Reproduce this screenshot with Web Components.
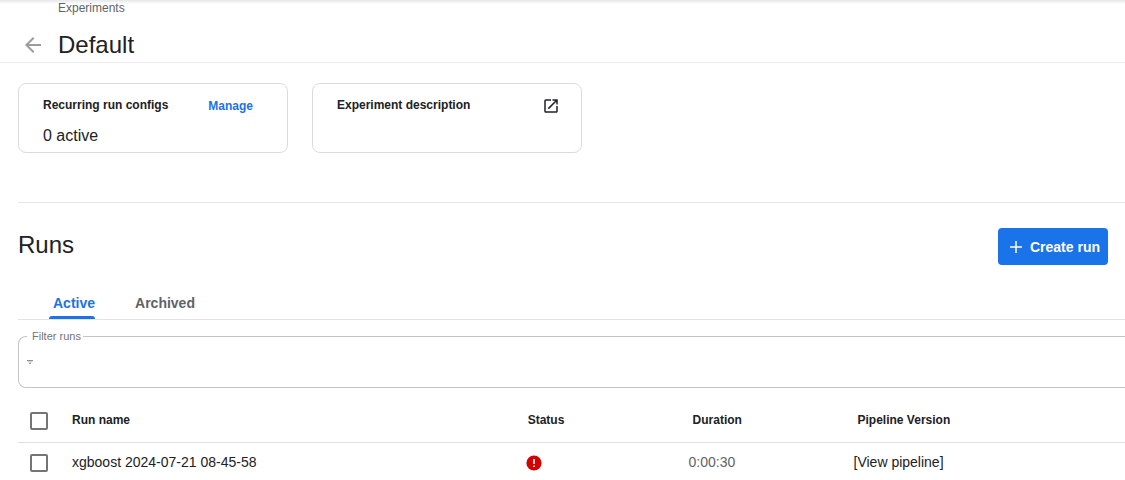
<!DOCTYPE html>
<html lang="en">
<head>
<meta charset="utf-8">
<title>Default - Experiments</title>
<style>
html { overflow: hidden; }
body { margin: 0; background: #fff; color: #202124; font: 14px/20px "Liberation Sans", Arial, sans-serif; --blue: #1a73e8; --line: #e8e8e8; }
</style>
</head>
<body>
<experiment-page></experiment-page>
<script>
const define = (name, html, setup) => {
  const template = document.createElement('template');
  template.innerHTML = '<style>:host{display:block}*{box-sizing:border-box}button{font:inherit;border:0;background:none;padding:0;cursor:pointer}svg{display:block}</style>' + html;
  customElements.define(name, class extends HTMLElement {
    constructor() {
      super();
      this.attachShadow({ mode: 'open' }).append(template.content.cloneNode(true));
    }
    connectedCallback() { if (setup) setup(this, this.shadowRoot); }
  });
};

define('page-header', `
<style>
:host { border-bottom: 1px solid #ebebeb; background: linear-gradient(#e6e7e9, #fff) 0 0 / 100% 4px no-repeat; padding-bottom: 2px; }
.crumb { padding-left: 58px; font-size: 12px; line-height: 16px; }
a { color: #5f6368; text-decoration: none; }
.title { display: flex; align-items: center; gap: 13px; padding: 14px 0 0 21px; }
button { color: #9c9c9c; }
h1 { margin: 0; font-size: 24px; line-height: 30px; height: 30px; font-weight: 400; }
</style>
<nav class="crumb" aria-label="Breadcrumb"><a href="#experiments">Experiments</a></nav>
<div class="title">
  <button aria-label="Back"><svg width="24" height="24" viewBox="0 0 24 24" fill="currentColor"><path d="M20 11H7.83l5.59-5.59L12 4l-8 8 8 8 1.410-1.410L7.830 13H20v-2z"/></svg></button>
  <h1><slot></slot></h1>
</div>`);

define('info-card', `
<style>
:host { flex: 0 1 270px; box-sizing: border-box; min-height: 70px; border: 1px solid #dadce0; border-radius: 8px; padding: 12px 24px 5px; }
.head { display: flex; height: 20px; align-items: center; justify-content: space-between; font-weight: 700; font-size: 12px; line-height: 18px; }
h2 { margin: 0; padding-bottom: 2px; font: inherit; }
.body { font-size: 16px; line-height: 22px; padding-top: 9px; }
</style>
<div class="head"><h2><slot name="title"></slot></h2><slot name="action"></slot></div>
<div class="body"><slot></slot></div>`);

define('text-action', `
<style>:host { padding-right: 10px; } button { display: block; color: var(--blue); }</style>
<button><slot></slot></button>`);

define('open-action', `
<style>:host { margin-right: -3px; } button { display: block; color: #202124; }</style>
<button aria-label="Open description"><svg width="18" height="18" viewBox="0 0 24 24" fill="currentColor"><path d="M19 19H5V5h7V3H5a2 2 0 0 0-2 2v14a2 2 0 0 0 2 2h14c1.100 0 2-.9 2-2v-7h-2v7zM14 3v2h3.590l-9.830 9.830 1.410 1.410L19 6.410V10h2V3h-7z"/></svg></button>`);

define('create-button', `
<style>
button { display: flex; align-items: center; gap: 4px; height: 37px; padding: 0 8px; border-radius: 4px; background: var(--blue); color: #fff; font-weight: 700; white-space: nowrap; }
</style>
<button><svg width="20" height="20" viewBox="0 0 20 20" fill="none" stroke="currentColor" stroke-width="1.500"><path d="M10 4v12M4 10h12"/></svg><span><slot></slot></span></button>`);

define('run-tabs', `
<style>
:host { border-bottom: 1px solid #e4e4e4; }
div { display: flex; gap: 36px; padding-left: 31px; }
button { height: 33px; padding: 0 0 0 4px; font-weight: 700; color: #5f6368; position: relative; }
button[aria-selected=true] { color: var(--blue); }
button[aria-selected=true]::after { content: ""; position: absolute; left: 0; right: 0; bottom: 0; height: 3px; border-radius: 3px 3px 0 0; background: var(--blue); }
</style>
<div role="tablist"><button role="tab" aria-selected="true">Active</button><button role="tab" aria-selected="false">Archived</button></div>`,
(host, root) => {
  const tabs = root.querySelectorAll('button');
  tabs.forEach(tab => tab.onclick = () => tabs.forEach(t => t.setAttribute('aria-selected', t === tab)));
});

define('run-filter', `
<style>
fieldset { margin: 0; border: 1px solid #c4c4c4; border-right: 0; border-radius: 8px 0 0 8px; padding: 0 0 0 7px; height: 58px; min-width: 0; }
legend { margin-left: 1px; padding: 0 2px 0 5px; font-size: 11px; line-height: 12px; color: #757575; }
.field { display: flex; align-items: center; height: 40px; gap: 8px; }
input { flex: 1; min-width: 0; border: 0; outline: 0; background: none; font: inherit; }
</style>
<fieldset><legend><label for="filter">Filter runs</label></legend>
<div class="field"><svg width="8" height="6" viewBox="0 0 8 6"><path d="M1 1.500h6" stroke="#8d9195"/><path d="M1 2h6L5 4H3z" fill="#d3d6d9"/><path d="M3 4.500h2" stroke="#a0a4a8"/></svg><input id="filter" type="text"></div></fieldset>`);

define('check-box', `
<style>
input { appearance: none; display: block; width: 18px; height: 18px; margin: 0; border: 2px solid #757575; border-radius: 2px; }
input:checked { background: var(--blue); border-color: var(--blue); }
</style><input type="checkbox">`,
(host, root) => root.querySelector('input').setAttribute('aria-label', host.getAttribute('label')));

define('runs-table', `
<style>
table { width: 100%; table-layout: fixed; border-collapse: collapse; }
.pick { width: 54px; } .name { width: 40.8%; } .data { width: 14.9%; }
th, td { text-align: left; padding: 0; vertical-align: middle; white-space: nowrap; }
thead tr { height: 54px; border-bottom: 1px solid #e0e0e0; }
tbody tr { height: 40px; }
th { font-size: 12px; padding: 10px 0 0 4px; }
th:nth-child(2) { padding-left: 0; }
th:first-child { padding: 12px 0 0 12px; } td:first-child { padding-left: 12px; }
td svg, td check-box { margin-top: 1px; }
td svg { margin-left: 2px; }
.time { color: #5f6368; }
a { color: inherit; text-decoration: none; }
</style>
<table>
<colgroup><col class="pick"><col class="name"><col class="data"><col class="data"><col></colgroup>
<thead><tr><th><check-box label="Select all runs"></check-box></th><th>Run name</th><th>Status</th><th>Duration</th><th>Pipeline Version</th></tr></thead>
<tbody><tr><td><check-box label="Select run"></check-box></td><td><a href="#run">xgboost 2024-07-21 08-45-58</a></td>
<td><svg width="16" height="16" viewBox="0 0 16 16" role="img" aria-label="Failed"><circle cx="8" cy="8" r="7.600" fill="#d50000"/><path d="M8 4v5M8 10.500v1.500" stroke="#fff" stroke-width="1.600"/></svg></td>
<td class="time">0:00:30</td><td><a href="#pipeline">[View pipeline]</a></td></tr></tbody>
</table>`);

define('experiment-page', `
<style>
main { padding-left: 18px; }
.cards { display: flex; gap: 24px; padding: 20px 18px 49px 0; border-bottom: 1px solid var(--line); }
.bar { display: flex; justify-content: space-between; align-items: flex-start; padding: 25px 17px 21px 0; }
h2 { margin: 0; font-size: 24px; line-height: 34px; font-weight: 400; }
run-filter { padding-top: 10px; }
</style>
<page-header>Default</page-header>
<main>
  <section class="cards">
    <info-card><span slot="title">Recurring run configs</span><text-action slot="action">Manage</text-action>0 active</info-card>
    <info-card><span slot="title">Experiment description</span><open-action slot="action"></open-action></info-card>
  </section>
  <section>
    <div class="bar"><h2>Runs</h2><create-button>Create run</create-button></div>
    <run-tabs></run-tabs>
    <run-filter></run-filter>
    <runs-table></runs-table>
  </section>
</main>`);
</script>
</body>
</html>
